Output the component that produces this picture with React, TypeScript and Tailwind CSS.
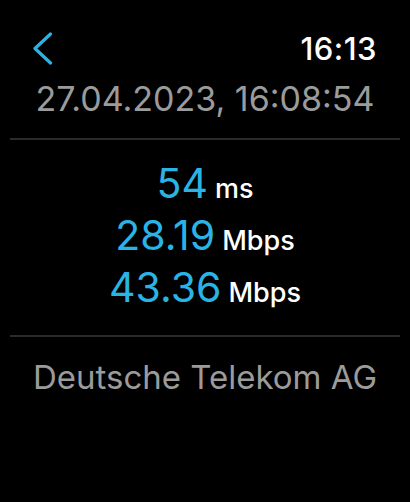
const rows = [
  { value: "54", unit: "ms" },
  { value: "28.19", unit: "Mbps" },
  { value: "43.36", unit: "Mbps" },
];

const App = () => {
  return (
    <div
      className="w-[410px] h-[502px] bg-black text-white flex flex-col"
      style={{ fontFamily: "Inter, 'Noto Sans', sans-serif" }}
    >
      {/* Header */}
      <div className="flex items-center justify-between pl-[32px] pr-[33px] pt-[32px] h-[64px]">
        <svg width="21" height="33" viewBox="0 0 21 33" fill="none">
          <path
            d="M18.5 2 L3 16.5 L18.5 31"
            stroke="#2ab4e6"
            strokeWidth="3.2"
            strokeLinecap="round"
            strokeLinejoin="round"
          />
        </svg>
        <span className="text-[31px] font-medium leading-none tracking-[0.5px]">16:13</span>
      </div>
      <div className="text-center text-[34px] leading-none text-[#9b9b9b] mt-[18px]">
        27.04.2023, 16:08:54
      </div>
      <div className="mx-[10px] h-[2px] bg-[#2a2a2d] mt-[22px]" />

      {/* Results */}
      <div className="flex flex-col items-center pt-[23px] gap-[11px]">
        {rows.map((r, i) => (
          <div key={i} className="flex items-baseline gap-[7px] leading-none">
            <span className="text-[41px] text-[#2ab4e6]">{r.value}</span>
            <span className="text-[27px] font-medium">{r.unit}</span>
          </div>
        ))}
      </div>
      <div className="mx-[10px] h-[2px] bg-[#2a2a2d] mt-[27px]" />

      <div className="text-center text-[33px] leading-none text-[#9b9b9b] mt-[24px]">
        Deutsche Telekom AG
      </div>
    </div>
  );
};

export default App;
